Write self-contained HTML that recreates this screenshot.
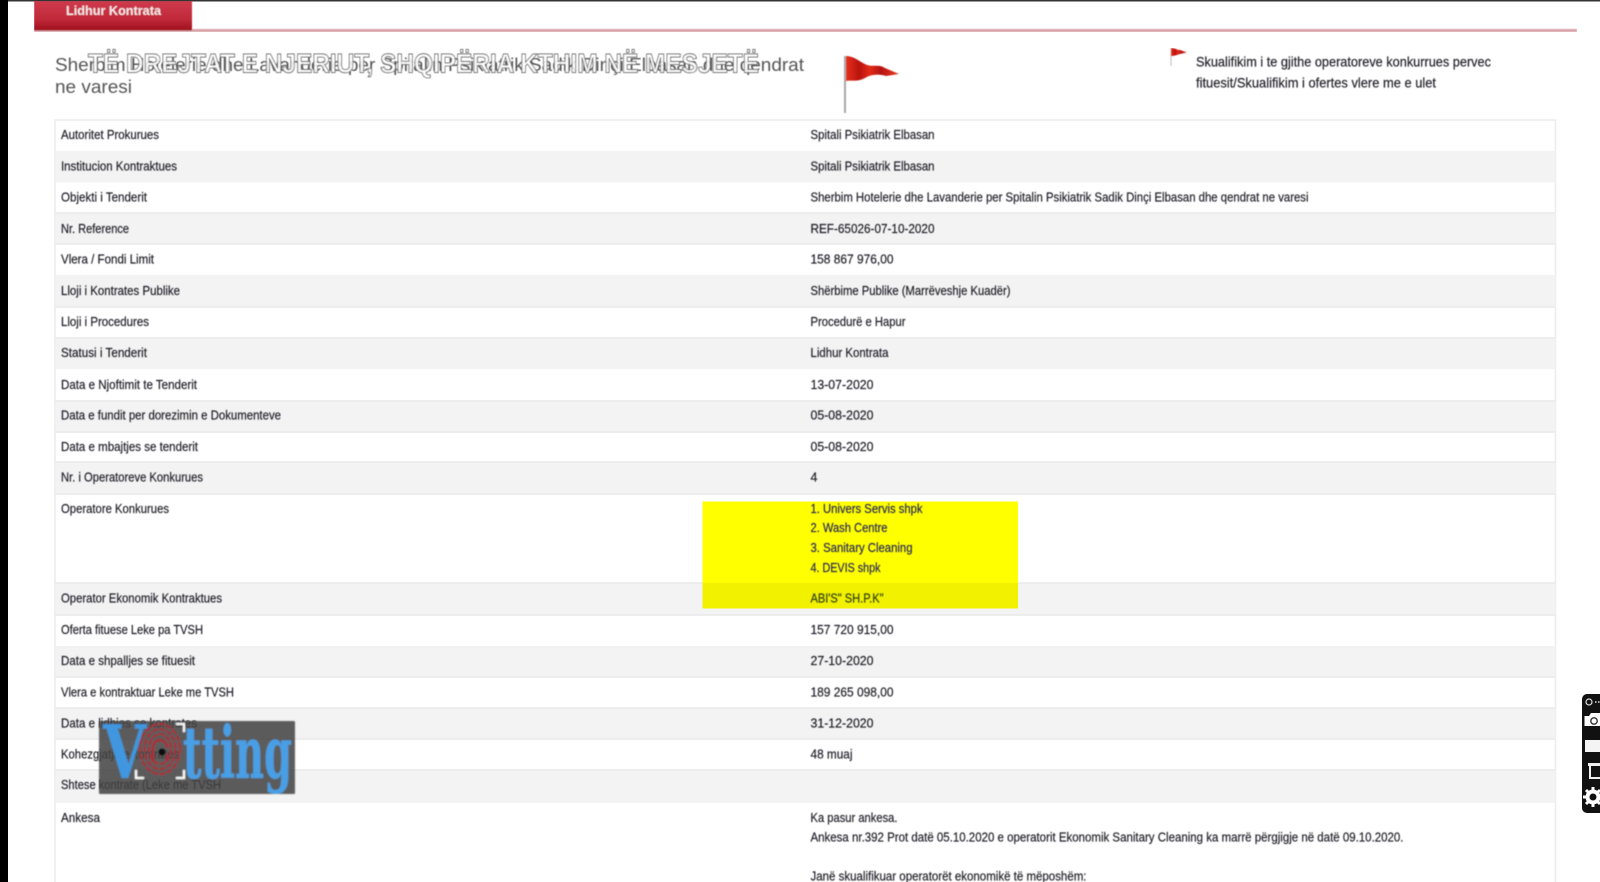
<!DOCTYPE html>
<html lang="sq"><head><meta charset="utf-8"><title>Lidhur Kontrata</title>
<style>
html,body{margin:0;padding:0;background:#fff;width:1600px;height:882px;overflow:hidden}
svg{display:block}
text{font-family:"Liberation Sans",Arial,sans-serif}
.t{font-size:12.5px;fill:#1e1e26;stroke:#1e1e26;stroke-width:.18px}
</style></head><body>
<svg width="1600" height="882" viewBox="0 0 1600 882" xmlns="http://www.w3.org/2000/svg">
<defs>
<linearGradient id="tab" x1="0" y1="0" x2="0" y2="1"><stop offset="0" stop-color="#cf3a4c"/><stop offset=".6" stop-color="#c02a3a"/><stop offset="1" stop-color="#a00f1e"/></linearGradient>
<linearGradient id="fl" x1="0" y1="0" x2="1" y2="0"><stop offset="0" stop-color="#e8301c"/><stop offset=".25" stop-color="#b8140e"/><stop offset=".45" stop-color="#e42a1a"/><stop offset=".65" stop-color="#b31510"/><stop offset="1" stop-color="#ef3a22"/></linearGradient>
<filter id="b" x="0" y="0" width="100%" height="100%"><feGaussianBlur stdDeviation="0.6"/></filter>
<filter id="b2" x="-5%" y="-5%" width="110%" height="110%"><feGaussianBlur stdDeviation="0.8"/></filter>
</defs>
<rect width="1600" height="882" fill="#fff"/>
<rect x="0" y="0" width="1600" height="1.5" fill="#333"/>
<rect x="0" y="0" width="8" height="882" fill="#000"/>
<g filter="url(#b)">
<rect x="34" y="29" width="1543" height="3" fill="#d9a3a9"/>
<rect x="34" y="1" width="158" height="29.5" fill="url(#tab)"/>
<text x="66" y="15" font-size="12.5" font-weight="bold" fill="#f6e8e8" textLength="95" lengthAdjust="spacingAndGlyphs">Lidhur Kontrata</text>
</g>
<!-- rows -->
<g>
<rect x="55" y="120" width="1500.5" height="763" fill="#fff" stroke="#ececec" stroke-width="1.5"/>
<rect x="55.500" y="151" width="1500" height="31.5" fill="#f3f3f3"/>
<rect x="55.500" y="213" width="1500" height="31" fill="#f3f3f3"/>
<rect x="55.500" y="275" width="1500" height="32" fill="#f3f3f3"/>
<rect x="55.500" y="338" width="1500" height="31" fill="#f3f3f3"/>
<rect x="55.500" y="401" width="1500" height="31" fill="#f3f3f3"/>
<rect x="55.500" y="462" width="1500" height="32" fill="#f3f3f3"/>
<rect x="55.500" y="583" width="1500" height="32" fill="#f3f3f3"/>
<rect x="55.500" y="646" width="1500" height="31" fill="#f3f3f3"/>
<rect x="55.500" y="708" width="1500" height="31" fill="#f3f3f3"/>
<rect x="55.500" y="770" width="1500" height="33" fill="#f3f3f3"/>
<g stroke="#e9e9e9" stroke-width="1.5">
<path d="M55 213H1555M55 244H1555M55 307H1555M55 338H1555M55 401H1555M55 432H1555M55 462H1555M55 494H1555M55 583H1555M55 615H1555M55 677H1555M55 708H1555M55 739H1555M55 770H1555"/>
</g>
</g>
<!-- yellow -->
<rect x="702.500" y="501.500" width="315.500" height="81.500" fill="#ffff00"/>
<rect x="702.500" y="583" width="315.500" height="25.500" fill="#f1f100"/>
<g filter="url(#b)">
<!-- title -->
<text x="55" y="71" font-size="18.5" fill="#555" textLength="749" lengthAdjust="spacingAndGlyphs">Sherbim Hotelerie dhe Lavanderie per Spitalin Psikiatrik Sadik Dinçi Elbasan dhe qendrat</text>
<text x="55" y="93" font-size="18.5" fill="#555" textLength="77" lengthAdjust="spacingAndGlyphs">ne varesi</text>
<text x="88" y="72.500" font-size="27" font-weight="bold" fill="#fff" fill-opacity=".88" stroke="#666" stroke-width="0.9" textLength="671" lengthAdjust="spacingAndGlyphs">TË DREJTAT E NJERIUT, SHQIPËRIA KTHIM NË MESJETË</text>
<!-- flags -->
<rect x="844" y="56" width="2" height="57" fill="#a8a8a8"/>
<path d="M846 56C854 56 860 62 867 65C873 67 879 64 885 68L899 74L886 76C879 74 872 74 865 78C858 82 852 80 846 81Z" fill="url(#fl)"/>
<rect x="1170.5" y="48" width="1" height="18" fill="#bbb"/>
<path d="M1171 48C1175 48 1177 50 1180 50L1187 52.5L1180 54C1177 55 1174 56 1171 56Z" fill="url(#fl)"/>
<text class="t" x="1196" y="66.5" style="font-size:14px" textLength="295" lengthAdjust="spacingAndGlyphs">Skualifikim i te gjithe operatoreve konkurrues pervec</text>
<text class="t" x="1196" y="87.5" style="font-size:14px" textLength="240" lengthAdjust="spacingAndGlyphs">fituesit/Skualifikim i ofertes vlere me e ulet</text>
<!-- labels -->
<text class="t" x="61" y="139" textLength="98" lengthAdjust="spacingAndGlyphs">Autoritet Prokurues</text>
<text class="t" x="61" y="170.500" textLength="116" lengthAdjust="spacingAndGlyphs">Institucion Kontraktues</text>
<text class="t" x="61" y="201.500" textLength="86" lengthAdjust="spacingAndGlyphs">Objekti i Tenderit</text>
<text class="t" x="61" y="233" textLength="68" lengthAdjust="spacingAndGlyphs">Nr. Reference</text>
<text class="t" x="61" y="263.5" textLength="93" lengthAdjust="spacingAndGlyphs">Vlera / Fondi Limit</text>
<text class="t" x="61" y="295" textLength="119" lengthAdjust="spacingAndGlyphs">Lloji i Kontrates Publike</text>
<text class="t" x="61" y="326" textLength="88" lengthAdjust="spacingAndGlyphs">Lloji i Procedures</text>
<text class="t" x="61" y="357" textLength="86" lengthAdjust="spacingAndGlyphs">Statusi i Tenderit</text>
<text class="t" x="61" y="389" textLength="136" lengthAdjust="spacingAndGlyphs">Data e Njoftimit te Tenderit</text>
<text class="t" x="61" y="419.5" textLength="220" lengthAdjust="spacingAndGlyphs">Data e fundit per dorezimin e Dokumenteve</text>
<text class="t" x="61" y="451" textLength="137" lengthAdjust="spacingAndGlyphs">Data e mbajtjes se tenderit</text>
<text class="t" x="61" y="481.500" textLength="142" lengthAdjust="spacingAndGlyphs">Nr. i Operatoreve Konkurues</text>
<text class="t" x="61" y="513" textLength="108" lengthAdjust="spacingAndGlyphs">Operatore Konkurues</text>
<text class="t" x="61" y="602.500" textLength="161" lengthAdjust="spacingAndGlyphs">Operator Ekonomik Kontraktues</text>
<text class="t" x="61" y="634" textLength="142" lengthAdjust="spacingAndGlyphs">Oferta fituese Leke pa TVSH</text>
<text class="t" x="61" y="665" textLength="134" lengthAdjust="spacingAndGlyphs">Data e shpalljes se fituesit</text>
<text class="t" x="61" y="696.5" textLength="173" lengthAdjust="spacingAndGlyphs">Vlera e kontraktuar Leke me TVSH</text>
<text class="t" x="61" y="727.5" textLength="136" lengthAdjust="spacingAndGlyphs">Data e lidhjes se kontrates</text>
<text class="t" x="61" y="758.5" textLength="118" lengthAdjust="spacingAndGlyphs">Kohezgjatja e kontrates</text>
<text class="t" x="61" y="789" textLength="160" lengthAdjust="spacingAndGlyphs">Shtese kontrate (Leke me TVSH</text>
<text class="t" x="61" y="822" textLength="39" lengthAdjust="spacingAndGlyphs">Ankesa</text>
<!-- values -->
<text class="t" x="810.500" y="139" textLength="124" lengthAdjust="spacingAndGlyphs">Spitali Psikiatrik Elbasan</text>
<text class="t" x="810.500" y="170.500" textLength="124" lengthAdjust="spacingAndGlyphs">Spitali Psikiatrik Elbasan</text>
<text class="t" x="810.500" y="201.500" textLength="498" lengthAdjust="spacingAndGlyphs">Sherbim Hotelerie dhe Lavanderie per Spitalin Psikiatrik Sadik Dinçi Elbasan dhe qendrat ne varesi</text>
<text class="t" x="810.500" y="233" textLength="124" lengthAdjust="spacingAndGlyphs">REF-65026-07-10-2020</text>
<text class="t" x="810.500" y="263.5" textLength="83" lengthAdjust="spacingAndGlyphs">158 867 976,00</text>
<text class="t" x="810.500" y="295" textLength="200" lengthAdjust="spacingAndGlyphs">Shërbime Publike (Marrëveshje Kuadër)</text>
<text class="t" x="810.500" y="326" textLength="95" lengthAdjust="spacingAndGlyphs">Procedurë e Hapur</text>
<text class="t" x="810.500" y="357" textLength="78" lengthAdjust="spacingAndGlyphs">Lidhur Kontrata</text>
<text class="t" x="810.500" y="389" textLength="63" lengthAdjust="spacingAndGlyphs">13-07-2020</text>
<text class="t" x="810.500" y="419.5" textLength="63" lengthAdjust="spacingAndGlyphs">05-08-2020</text>
<text class="t" x="810.500" y="451" textLength="63" lengthAdjust="spacingAndGlyphs">05-08-2020</text>
<text class="t" x="810.500" y="481.500">4</text>
<text class="t" x="810.500" y="513" style="fill:#28285e;stroke:#28285e" textLength="112" lengthAdjust="spacingAndGlyphs">1. Univers Servis shpk</text>
<text class="t" x="810.500" y="532" style="fill:#28285e;stroke:#28285e" textLength="77" lengthAdjust="spacingAndGlyphs">2. Wash Centre</text>
<text class="t" x="810.500" y="552" style="fill:#28285e;stroke:#28285e" textLength="102" lengthAdjust="spacingAndGlyphs">3. Sanitary Cleaning</text>
<text class="t" x="810.500" y="572" style="fill:#28285e;stroke:#28285e" textLength="70" lengthAdjust="spacingAndGlyphs">4. DEVIS shpk</text>
<text class="t" x="810.500" y="602.500" style="fill:#2e3e18;stroke:#2e3e18" textLength="73" lengthAdjust="spacingAndGlyphs">ABI'S" SH.P.K"</text>
<text class="t" x="810.500" y="634" textLength="83" lengthAdjust="spacingAndGlyphs">157 720 915,00</text>
<text class="t" x="810.500" y="665" textLength="63" lengthAdjust="spacingAndGlyphs">27-10-2020</text>
<text class="t" x="810.500" y="696.5" textLength="83" lengthAdjust="spacingAndGlyphs">189 265 098,00</text>
<text class="t" x="810.500" y="727.5" textLength="63" lengthAdjust="spacingAndGlyphs">31-12-2020</text>
<text class="t" x="810.500" y="758.5" textLength="42" lengthAdjust="spacingAndGlyphs">48 muaj</text>
<text class="t" x="810.500" y="822" textLength="87" lengthAdjust="spacingAndGlyphs">Ka pasur ankesa.</text>
<text class="t" x="810.500" y="841.5" textLength="593" lengthAdjust="spacingAndGlyphs">Ankesa nr.392 Prot datë 05.10.2020 e operatorit Ekonomik Sanitary Cleaning ka marrë përgjigje në datë 09.10.2020.</text>
<text class="t" x="810.500" y="880.5" textLength="276" lengthAdjust="spacingAndGlyphs">Janë skualifikuar operatorët ekonomikë të mëposhëm:</text>
</g>
<!-- logo -->
<g filter="url(#b2)">
<rect x="99" y="721" width="196" height="73" rx="1" fill="#444" fill-opacity=".86"/>
<g fill="none" stroke="#fff" stroke-width="2">
<path d="M136 770v8h8M184 770v8h-8M176 724h8v8"/>
</g>
<g fill="none" stroke="#a92f37" stroke-width="2" stroke-dasharray="6 1.500">
<ellipse cx="160" cy="749" rx="20" ry="25"/>
<ellipse cx="160" cy="749" rx="15.5" ry="20"/>
<ellipse cx="160" cy="749" rx="11" ry="15"/>
</g>
<path d="M153 762V748a7 8 0 0 1 14 0M167 754v8" fill="none" stroke="#a92f37" stroke-width="2.500"/>
<circle cx="162" cy="752" r="3.500" fill="#111"/>
<text x="103" y="778" font-size="74" font-weight="bold" fill="#3f97e0" style='font-family:"DejaVu Serif","Liberation Serif",serif' textLength="43" lengthAdjust="spacingAndGlyphs">V</text>
<text x="183" y="778" font-size="72" font-weight="bold" fill="#4a9fe6" style='font-family:"DejaVu Serif","Liberation Serif",serif' textLength="109" lengthAdjust="spacingAndGlyphs">tting</text>
</g>
<!-- toolbar -->
<g>
<path d="M1600 694H1587a5 5 0 0 0-5 5V808a5 5 0 0 0 5 5H1600Z" fill="#111"/>
<circle cx="1589" cy="702" r="3" fill="none" stroke="#ddd" stroke-width="1.2"/>
<path d="M1595 702h5" stroke="#ddd" stroke-width="1.5" stroke-dasharray="1.5 1.5"/>
<path d="M1584.500 716H1589l2-3h9V726H1584.500Z" fill="#fff"/>
<circle cx="1594" cy="721" r="3.200" fill="#fff" stroke="#333" stroke-width="1.400"/>
<rect x="1585" y="740" width="15" height="12" fill="#f4f4f4"/>
<rect x="1588" y="763" width="12" height="3" fill="#eee"/>
<path d="M1600 765H1590v13H1600" fill="none" stroke="#f0f0f0" stroke-width="2"/>
<circle cx="1593" cy="797" r="5.500" fill="none" stroke="#fff" stroke-width="4"/>
<g stroke="#fff" stroke-width="3">
<path d="M1593 787v4M1593 803v4M1583 797h4M1599 797h1M1586 790l3 3M1597 801l3 3M1586 804l3-3M1597 793l3-3"/>
</g>
</g>
</svg>
</body></html>
